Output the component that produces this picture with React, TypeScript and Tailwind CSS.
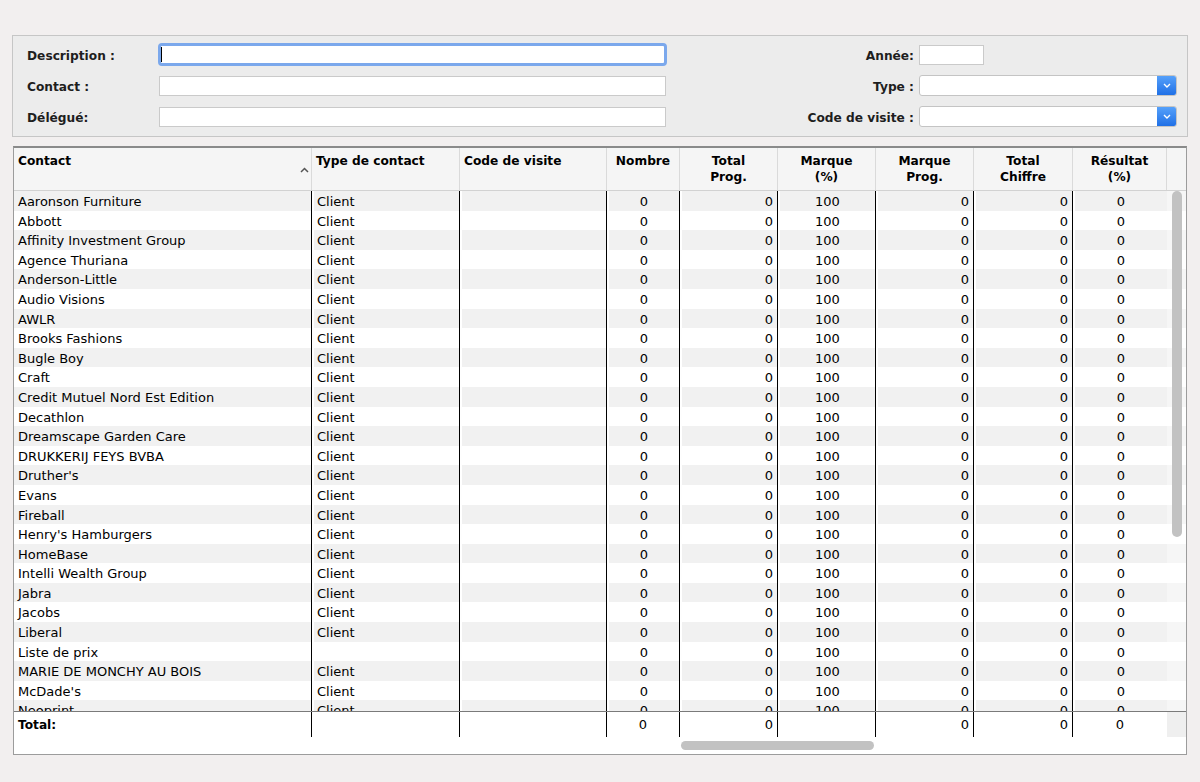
import React from "react";

const rows: [string, string][] = [
  ["Aaronson Furniture", "Client"],
  ["Abbott", "Client"],
  ["Affinity Investment Group", "Client"],
  ["Agence Thuriana", "Client"],
  ["Anderson-Little", "Client"],
  ["Audio Visions", "Client"],
  ["AWLR", "Client"],
  ["Brooks Fashions", "Client"],
  ["Bugle Boy", "Client"],
  ["Craft", "Client"],
  ["Credit Mutuel Nord Est Edition", "Client"],
  ["Decathlon", "Client"],
  ["Dreamscape Garden Care", "Client"],
  ["DRUKKERIJ FEYS BVBA", "Client"],
  ["Druther's", "Client"],
  ["Evans", "Client"],
  ["Fireball", "Client"],
  ["Henry's Hamburgers", "Client"],
  ["HomeBase", "Client"],
  ["Intelli Wealth Group", "Client"],
  ["Jabra", "Client"],
  ["Jacobs", "Client"],
  ["Liberal", "Client"],
  ["Liste de prix", ""],
  ["MARIE DE MONCHY AU BOIS", "Client"],
  ["McDade's", "Client"],
  ["Neoprint", "Client"],
];

type Align = "left" | "center" | "right";
const cols: { w: number; align: Align; title: string[] }[] = [
  { w: 298, align: "left", title: ["Contact"] },
  { w: 148, align: "left", title: ["Type de contact"] },
  { w: 147, align: "left", title: ["Code de visite"] },
  { w: 73, align: "center", title: ["Nombre"] },
  { w: 98, align: "right", title: ["Total", "Prog."] },
  { w: 98, align: "center", title: ["Marque", "(%)"] },
  { w: 98, align: "right", title: ["Marque", "Prog."] },
  { w: 99, align: "right", title: ["Total", "Chiffre"] },
  { w: 94, align: "center", title: ["Résultat", "(%)"] },
];

const alignCls = (a: Align) =>
  a === "left" ? "justify-start pl-[3px]" : a === "center" ? "justify-center" : "justify-end pr-[4px]";

const headerAlign = (i: number) =>
  i < 3 ? "items-start text-left pl-[4px]" : "items-center text-center";

function SelectBox() {
  return (
    <div className="flex h-[21px] w-[258px] border border-[#c4c4c4] rounded-[3px] bg-white overflow-hidden">
      <div className="flex-1" />
      <div className="flex w-[19px] items-center justify-center bg-gradient-to-b from-[#55a0fa] to-[#1f70e6]">
        <svg width="8" height="5" viewBox="0 0 8 5">
          <path d="M1 1 L4 4 L7 1" fill="none" stroke="white" strokeWidth="1.4" />
        </svg>
      </div>
    </div>
  );
}

const labelCls = "pt-[3px] text-[12.2px] font-bold text-[#1e1e1e]";

export default function App() {
  const font = { fontFamily: '"DejaVu Sans", sans-serif' };
  return (
    <div
      className="w-[1200px] h-[782px] bg-[#f2efef] pt-[35px] px-[12px] overflow-hidden text-black"
      style={font}
    >
      {/* Filter panel */}
      <div className="flex h-[102px] justify-between border border-[#c6c6c6] bg-[#ececec] pl-[14px] pr-[10px] pt-[8px]">
        <div className="flex flex-col gap-[10px]">
          <div className="flex h-[21px] items-center">
            <div className={`w-[132px] ${labelCls}`}>Description :</div>
            <div className="-ml-[1px] flex h-[23px] w-[509px] items-center rounded-[4px] border-[3px] border-[#7ba8ec] bg-white">
              <div className="h-[15px] w-px bg-black" />
            </div>
          </div>
          <div className="flex h-[21px] items-center">
            <div className={`w-[132px] ${labelCls}`}>Contact :</div>
            <div className="h-[20px] w-[507px] border border-[#cacaca] bg-white" />
          </div>
          <div className="flex h-[21px] items-center">
            <div className={`w-[132px] ${labelCls}`}>Délégué:</div>
            <div className="h-[20px] w-[507px] border border-[#cacaca] bg-white" />
          </div>
        </div>
        <div className="grid grid-cols-[114px_258px] gap-x-[5px] gap-y-[10px] auto-rows-[21px]">
          <div className={`flex items-center justify-end ${labelCls}`}>Année:</div>
          <div className="flex items-center">
            <div className="h-[20px] w-[65px] border border-[#cacaca] bg-white" />
          </div>
          <div className={`flex items-center justify-end ${labelCls}`}>Type :</div>
          <SelectBox />
          <div className={`flex items-center justify-end ${labelCls}`}>Code de visite :</div>
          <SelectBox />
        </div>
      </div>

      {/* Table */}
      <div className="mt-[9px] ml-[1px] mr-[1px] flex flex-col border border-[#9c9c9c] border-t-2 border-t-[#8a8a8a] bg-white">
        {/* Header */}
        <div className="flex h-[43px] border-b border-[#d2d2d2] bg-[#f5f5f5]">
          {cols.map((c, i) => (
            <div
              key={i}
              className={`relative flex flex-col border-r border-[#dadada] pt-[5px] text-[12.2px] font-bold leading-[16px] ${headerAlign(i)}`}
              style={{ width: c.w }}
            >
              {c.title.map((t, j) => (
                <span key={j}>{t}</span>
              ))}
              {i === 0 && (
                <svg className="absolute right-[2px] top-[19px]" width="9" height="6" viewBox="0 0 9 6">
                  <path d="M1 5 L4.5 1.5 L8 5" fill="none" stroke="#555" strokeWidth="1.5" />
                </svg>
              )}
            </div>
          ))}
          <div className="flex-1" />
        </div>

        {/* Body */}
        <div className="relative h-[520px] overflow-hidden">
          {rows.map(([name, type], r) => {
            const stripe = r % 2 === 0 ? "bg-[#f1f1f1]" : "bg-white";
            const values = [name, type, "", "0", "0", "100", "0", "0", "0"];
            return (
              <div key={r} className="flex h-[19.6px] text-[13px] leading-[21.4px]">
                {cols.map((c, i) => (
                  <div
                    key={i}
                    className={`flex ${i < 8 ? "border-r border-black" : ""}`}
                    style={{ width: c.w }}
                  >
                    <div className={`flex flex-1 h-[19.6px] whitespace-nowrap ${i > 0 ? "ml-[2px]" : ""} ${stripe} ${i === 0 ? "justify-start pl-[4px]" : alignCls(c.align)}`}>
                      {values[i]}
                    </div>
                  </div>
                ))}
                <div className={`flex-1 ${r % 2 === 0 ? "bg-[#f6f6f6]" : "bg-white"}`} />
              </div>
            );
          })}
          <div className="absolute right-[4px] top-0 h-[346px] w-[10px] rounded-full bg-[#c2c2c2]" />
        </div>

        {/* Total row */}
        <div className="flex h-[26px] border-t border-[#7a7a7a] text-[13px]">
          {cols.map((c, i) => {
            const vals = ["", "", "", "0", "0", "", "0", "0", "0"];
            return (
              <div
                key={i}
                className={`flex items-center ${i < 8 ? "border-r border-black" : ""} ${i === 0 ? "pl-[4px]" : alignCls(c.align)}`}
                style={{ width: c.w }}
              >
                {i === 0 ? <span className="pt-[1px] text-[12.2px] font-bold">Total:</span> : vals[i]}
              </div>
            );
          })}
          <div className="flex-1 bg-[#efefef]" />
        </div>

        {/* Horizontal scrollbar */}
        <div className="h-[17px] pt-[4px]">
          <div className="ml-[667px] h-[9px] w-[193px] rounded-full bg-[#c2c2c2]" />
        </div>
      </div>
    </div>
  );
}
